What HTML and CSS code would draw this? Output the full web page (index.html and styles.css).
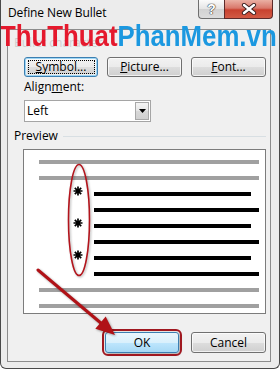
FILE: index.html
```html
<!DOCTYPE html>
<html>
<head>
<meta charset="utf-8">
<link rel="stylesheet" href="styles.css">
</head>
<body>
<div class="window">
  <div class="titlebar">
    <div class="title">Define New Bullet</div>
    <div class="caption-btns">
      <div class="cb help">?</div>
      <div class="cb close">
        <svg width="16" height="12" viewBox="0 0 16 12">
          <path d="M3 2 L13 10 M13 2 L3 10" stroke="#3a2020" stroke-width="4.2" stroke-linecap="round"/>
          <path d="M3 2 L13 10 M13 2 L3 10" stroke="#ffffff" stroke-width="2.4" stroke-linecap="round"/>
        </svg>
      </div>
    </div>
  </div>
  <div class="panel">
    <div class="group-label">Bullet character</div>
    <div class="btn-row">
      <button class="btn focused"><span class="focus-ring"><u>S</u>ymbol...</span></button>
      <button class="btn"><u>P</u>icture...</button>
      <button class="btn"><u>F</u>ont...</button>
    </div>
    <div class="label">Align<u>m</u>ent:</div>
    <div class="select">
      <span class="select-text">Left</span>
      <span class="drop">
        <svg width="7" height="4" viewBox="0 0 7 4"><path d="M0 0 H7 L3.5 4 Z" fill="#000"/></svg>
      </span>
    </div>
    <div class="legend"><span>Preview</span><span class="rule"></span></div>
    <div class="preview">
      <div class="lines">
        <div class="ln gray"></div>
        <div class="ln gray"></div>
        <div class="brow">
          <svg class="bullet" width="10" height="10" viewBox="0 0 10 10"><path d="M5 0.5 V9.5 M0.5 5 H9.5 M1.8 1.8 L8.2 8.2 M8.2 1.8 L1.8 8.2" stroke="#000" stroke-width="1.7"/><circle cx="5" cy="5" r="2" fill="#000"/></svg>
          <div class="ln black short"></div>
        </div>
        <div class="ln black long"></div>
        <div class="brow">
          <svg class="bullet" width="10" height="10" viewBox="0 0 10 10"><path d="M5 0.5 V9.5 M0.5 5 H9.5 M1.8 1.8 L8.2 8.2 M8.2 1.8 L1.8 8.2" stroke="#000" stroke-width="1.7"/><circle cx="5" cy="5" r="2" fill="#000"/></svg>
          <div class="ln black short"></div>
        </div>
        <div class="ln black long"></div>
        <div class="brow">
          <svg class="bullet" width="10" height="10" viewBox="0 0 10 10"><path d="M5 0.5 V9.5 M0.5 5 H9.5 M1.8 1.8 L8.2 8.2 M8.2 1.8 L1.8 8.2" stroke="#000" stroke-width="1.7"/><circle cx="5" cy="5" r="2" fill="#000"/></svg>
          <div class="ln black short"></div>
        </div>
        <div class="ln black long"></div>
        <div class="ln gray"></div>
        <div class="ln gray"></div>
      </div>
      <svg class="ellipse" width="24" height="114" viewBox="0 0 24 114">
        <ellipse cx="12" cy="57" rx="10.5" ry="55.5" fill="none" stroke="#b3141c" stroke-width="1.6"/>
      </svg>
    </div>
    <div class="footer">
      <button class="btn ok">OK</button>
      <button class="btn cancel">Cancel</button>
    </div>
  </div>
  <div class="watermark"><span class="red">ThuThuat</span><span class="blue">PhanMem.vn</span></div>
  <svg class="arrow" width="280" height="369" viewBox="0 0 280 369">
    <line x1="37" y1="270" x2="101" y2="324" stroke="#b01217" stroke-width="3" stroke-linecap="round"/>
    <polygon points="114,335 94.3,328.8 104.7,316.6" fill="#b01217"/>
  </svg>
</div>
</body>
</html>
```

FILE: styles.css
```css
* { box-sizing: border-box; }
html, body { margin: 0; padding: 0; background: #ffffff; }
body { font-family: "Open Sans", "Noto Sans", sans-serif; font-size: 12px; color: #000; }

.window {
  position: relative;
  width: 280px;
  height: 369px;
  background: #ececec;
  border: 1px solid #4a4a4a;
  border-top: none;
  border-radius: 0 0 6px 6px;
  overflow: hidden;
}

.titlebar {
  height: 29px;
  display: flex;
  justify-content: space-between;
  align-items: flex-start;
}
.title {
  padding: 5px 0 0 7px;
  line-height: 16px;
  font-size: 12px;
  letter-spacing: -0.1px;
  color: #000;
}
.caption-btns {
  display: flex;
  margin-right: 6px;
}
.cb {
  height: 19px;
  display: flex;
  align-items: center;
  justify-content: center;
}
.help {
  width: 26px;
  border: 1px solid #6e6e6e;
  border-top: none;
  border-right: none;
  border-radius: 0 0 0 4px;
  background: linear-gradient(#fbfbfb, #e4e4e4 50%, #d2d2d2 51%, #dcdcdc);
  font-family: "Liberation Sans", sans-serif;
  font-weight: bold;
  font-size: 14px;
  color: #ffffff;
  text-shadow: 0 0 1px #333, 0 0 1px #333, 0 0 1px #333;
}
.close {
  width: 49px;
  border: 1px solid #5c2a2a;
  border-top: none;
  border-radius: 0 0 4px 0;
  background: linear-gradient(#eab0a4, #d9786b 45%, #c8412f 55%, #d25a44);
}

.panel {
  height: 333px;
  margin: 0 8px 0 6px;
  border: 1px solid #8c8c8c;
  background: #f0f0f0;
}

.group-label {
  height: 27px;
  padding: 5px 0 0 6px;
  line-height: 16px;
  color: #cfcfcf;
}

.btn-row {
  display: flex;
  gap: 9px;
  margin-left: 16px;
}
.btn {
  width: 74px;
  height: 20px;
  padding: 0;
  font-family: "Open Sans", "Noto Sans", sans-serif;
  font-size: 12px;
  color: #000;
  border: 1px solid #707070;
  border-radius: 3px;
  background: linear-gradient(#f2f2f2, #ebebeb 50%, #dddddd 51%, #cfcfcf);
  box-shadow: inset 0 0 0 1px rgba(255,255,255,0.7);
  display: flex;
  align-items: center;
  justify-content: center;
  line-height: 16px;
}
.btn-row .btn:nth-child(n+2) { width: 75px; }
.btn.focused {
  border-color: #3c7fb1;
  box-shadow: inset 0 0 0 1px #9ed6f5, inset 0 0 0 2px rgba(255,255,255,0.6);
}
.focus-ring {
  display: flex;
  align-items: center;
  justify-content: center;
  width: 67px;
  height: 14px;
  border: 1px dotted #000;
}

.label {
  margin: 2px 0 0 16px;
  line-height: 16px;
}

.select {
  margin: 5px 0 0 16px;
  width: 127px;
  height: 22px;
  border: 1px solid #a5a5a5;
  background: #fff;
  display: flex;
  align-items: center;
  justify-content: space-between;
  padding: 0 1px 0 2px;
}
.select-text { line-height: 16px; }
.drop {
  width: 14px;
  height: 18px;
  border: 1px solid #a8a8a8;
  background: linear-gradient(#f4f4f4, #e6e6e6 50%, #d8d8d8 51%, #d0d0d0);
  display: flex;
  align-items: center;
  justify-content: center;
}

.legend {
  margin: 6px 4px 0 6px;
  display: flex;
  align-items: center;
  line-height: 16px;
}
.rule {
  flex: 1;
  margin-left: 5px;
  border-top: 1px solid #d8dfe3;
}

.preview {
  position: relative;
  margin: 5px 4px 0 15px;
  height: 165px;
  border: 1px solid #7c7c7c;
  background: #fff;
  padding: 10px 0 5px 0;
}
.lines {
  display: flex;
  flex-direction: column;
  gap: 12px;
}
.ln { height: 4px; }
.gray { background: #a0a0a0; margin: 0 6px 0 15px; }
.black { background: #000; }
.long { margin: 0 6px 0 70px; }
.brow {
  display: flex;
  align-items: flex-start;
  height: 4px;
  margin-left: 49px;
}
.bullet {
  flex: none;
  margin-top: -6px;
}
.brow .short {
  flex: 1;
  margin: 0 14px 0 11px;
}
.ellipse {
  position: absolute;
  left: 43px;
  top: 13px;
  filter: drop-shadow(1px 1px 1px rgba(0,0,0,0.3));
}

.footer {
  display: flex;
  justify-content: flex-end;
  gap: 12px;
  margin: 18px 4px 0 0;
}
.footer .btn { height: 21px; }
.btn.ok {
  width: 74px;
  border-color: #3c7fb1;
  background: linear-gradient(#eaf6fd, #d9f0fc 50%, #bee6fd 51%, #a7d9f5);
  outline: 2px solid #a01820;
  outline-offset: 1px;
  box-shadow: 1px 1px 3px rgba(0,0,0,0.35);
}
.btn.cancel { width: 75px; }

.watermark {
  position: absolute;
  left: -1px;
  top: 21px;
  font-family: "Liberation Sans", Arial, sans-serif;
  font-weight: bold;
  font-size: 30px;
  line-height: 30px;
  white-space: nowrap;
  transform: scaleX(0.86);
  transform-origin: left top;
}
.red { color: #e5192d; }
.blue { color: #1b98e0; }

.arrow {
  position: absolute;
  left: 0;
  top: 0;
  pointer-events: none;
  filter: drop-shadow(1px 1px 1px rgba(0,0,0,0.35));
}
```
